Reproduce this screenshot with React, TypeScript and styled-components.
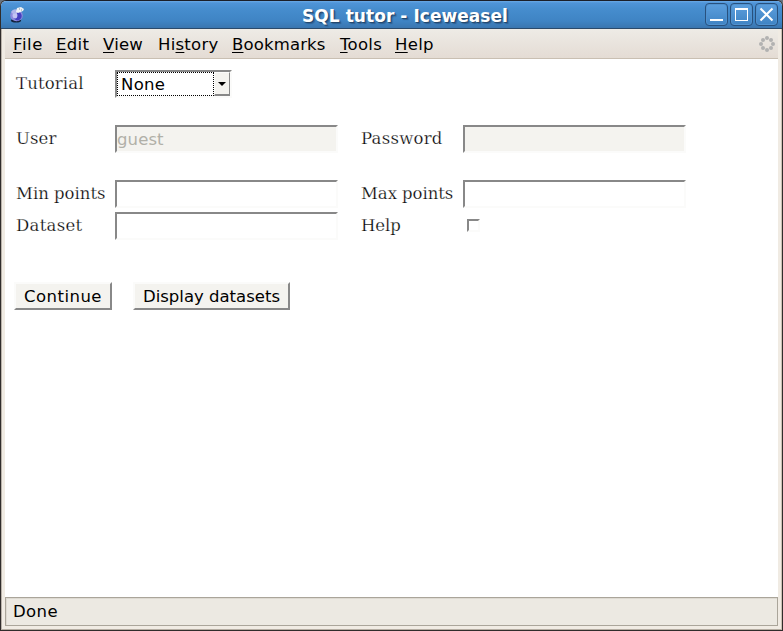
import React from "react";
import styled, { createGlobalStyle } from "styled-components";

const GlobalStyle = createGlobalStyle`
  * { box-sizing: border-box; }
  body { margin: 0; background: #69737f; overflow: hidden; }
`;

const sans = `"DejaVu Sans", sans-serif`;

const Window = styled.div`
  width: 783px;
  height: 631px;
  display: flex;
  flex-direction: column;
  border: 1px solid #302c2b;
  border-top-color: #1b1f29;
  border-radius: 6px 6px 0 0;
  overflow: hidden;
  background: #ece9e2;
  font-family: ${sans};
  font-size: 16.5px;
  color: #000;
`;

const TitleBar = styled.header`
  height: 28px;
  flex: none;
  display: grid;
  grid-template-columns: 107px 1fr 80px;
  align-items: center;
  border-bottom: 1px solid #2b4a6b;
  background: linear-gradient(#6aa9e6 0, #4f94d8 2px, #468dce 8px, #3f84c4 20px, #3a76b0 27px);
`;

const AppIcon = styled.svg`
  display: block;
  margin-left: 8px;
`;

const Title = styled.h1`
  margin: 0;
  padding-top: 2px;
  text-align: center;
  font-size: 17px;
  line-height: 20px;
  font-weight: bold;
  letter-spacing: 0.05px;
  color: #fff;
  text-shadow: 1px 1px 0 #24486e, 2px 2px 1px #24486e88;
  white-space: nowrap;
`;

const WindowButtons = styled.div`
  display: flex;
  gap: 2px;
  justify-content: flex-end;
  padding-right: 4px;
`;

const WindowButton = styled.button`
  width: 23px;
  height: 23px;
  padding: 0;
  border: 1px solid #28517e;
  border-radius: 4px;
  background: linear-gradient(#5c9fde, #3f83c3);
  box-shadow: inset 0 0 0 1px #5092d0;

  svg { display: block; }
`;

const Body = styled.div`
  flex: 1;
  display: flex;
  flex-direction: column;
  min-height: 0;
  border-left: 1px solid #b9b2aa;
  border-right: 1px solid #cbc1b4;
  border-bottom: 1px solid #b5ada2;
  padding: 0 3px 3px;
  background: #f0ebe3;
`;

const MenuBar = styled.nav`
  height: 30px;
  flex: none;
  display: flex;
  align-items: center;
  padding: 0 3px 0 8px;
  border-bottom: 1px solid #c9bfb2;
  background: linear-gradient(#eeebe6, #e4dcd4);
`;

const MenuItem = styled.span<{ $width: number; $spacing: number }>`
  width: ${(p) => p.$width}px;
  padding-top: 2px;
  line-height: 20px;
  letter-spacing: ${(p) => p.$spacing}px;
  white-space: nowrap;

  u { text-underline-offset: 2px; text-decoration-thickness: 1px; text-decoration-skip-ink: none; }
`;

const Throbber = styled.svg`
  margin-left: auto;
`;

const Page = styled.main`
  flex: 1;
  background: #fff;
  padding: 11px 9px 0;
`;

const FieldRow = styled.div<{ $gap: number }>`
  display: grid;
  grid-template-columns: 99px 246px 102px 223px;
  height: 28px;
  margin: 0 0 ${(p) => p.$gap}px 2px;
`;

const Label = styled.label<{ $spacing: number }>`
  font-family: "DejaVu Serif", serif;
  font-size: 16.5px;
  line-height: 20px;
  padding-top: 4px;
  letter-spacing: ${(p) => p.$spacing}px;
  -webkit-text-stroke: 0.25px #fff;
  white-space: nowrap;
`;

const inset = `
  border: 2px solid;
  border-color: #888 #fbfbfa #fbfbfa #888;
`;

const TextField = styled.input`
  ${inset}
  width: 223px;
  height: 28px;
  padding: 1px 0 0;
  border-radius: 0;
  outline: 0;
  background: #fff;
  font: 16.5px ${sans};
  letter-spacing: 0.1px;

  &:disabled { background: #f4f3ef; color: #b1b0a8; }
`;

const Select = styled.div`
  ${inset}
  display: flex;
  width: 117px;
  height: 28px;
`;

const SelectValue = styled.div`
  width: 97px;
  height: 24px;
  border: 1px dotted #000;
  padding: 2px 0 0 3px;
  line-height: 19px;
  letter-spacing: 0.3px;
`;

const SelectArrow = styled.div`
  flex: 1;
  height: 24px;
  display: grid;
  place-items: center;
  background: #f4f3ef;
  border: solid;
  border-width: 1px 1px 2px 1px;
  border-color: #fbfbfa #888 #888 #fbfbfa;
`;

const CheckBox = styled.input`
  ${inset}
  appearance: none;
  width: 13px;
  height: 13px;
  margin: 7px 0 0 4px;
  background: #fff;
`;

const Actions = styled.div`
  display: flex;
  gap: 21px;
  padding-top: 42px;
`;

const PushButton = styled.button<{ $width: number; $spacing: number }>`
  width: ${(p) => p.$width}px;
  height: 28px;
  padding: 0;
  border: 2px solid;
  border-color: #fbfbfa #888 #888 #fbfbfa;
  border-radius: 0;
  background: #f4f3ef;
  color: #000;
  font: 16.5px ${sans};
  letter-spacing: ${(p) => p.$spacing}px;
  white-space: nowrap;
`;

const StatusBar = styled.footer`
  height: 29px;
  flex: none;
  border: 1px solid #aaa59a;
  box-shadow: inset 1px 1px 0 #dedad2;
  background: #ece9e2;
  padding: 4px 0 0 7px;
  line-height: 20px;
  letter-spacing: 0.4px;
`;

const menus = [
  { before: "", key: "F", after: "ile", width: 43, spacing: 0.6 },
  { before: "", key: "E", after: "dit", width: 47, spacing: 0.3 },
  { before: "", key: "V", after: "iew", width: 55, spacing: 0.2 },
  { before: "Hi", key: "s", after: "tory", width: 74, spacing: 0.25 },
  { before: "", key: "B", after: "ookmarks", width: 108, spacing: 0.15 },
  { before: "", key: "T", after: "ools", width: 55, spacing: 0.3 },
  { before: "", key: "H", after: "elp", width: 40, spacing: 0.3 },
];

const dots = [[8, 2], [12, 4], [14, 8], [12, 12], [8, 14], [4, 12], [2, 8], [4, 4]];

export default function App() {
  return (
    <>
      <GlobalStyle />
      <Window>
        <TitleBar>
          <AppIcon width="16" height="18" viewBox="0 0 16 18">
            <ellipse cx="7" cy="14.5" rx="5" ry="2" fill="#14243f" />
            <ellipse cx="7.5" cy="9.5" rx="6.3" ry="5.8" fill="#8d8ade" />
            <ellipse cx="8.5" cy="10" rx="4.2" ry="4.4" fill="#4540c0" />
            <ellipse cx="6" cy="9.5" rx="2.4" ry="3" fill="#c3c4f4" />
            <path d="M2 6Q4 2 9 4L8 7L4 8Z" fill="#b0b6ea" />
            <path d="M7 6L8 2L12 1L15 3L14 5L9 7Z" fill="#eef2f5" />
            <path d="M10 3h1M12 4h1" stroke="#8c97a3" />
          </AppIcon>
          <Title>SQL tutor - Iceweasel</Title>
          <WindowButtons>
            <WindowButton aria-label="Minimize">
              <svg width="21" height="21"><path d="M4 16h13" stroke="#fff" strokeWidth="2" /></svg>
            </WindowButton>
            <WindowButton aria-label="Maximize">
              <svg width="21" height="21" shapeRendering="crispEdges">
                <path d="M4 5h13" stroke="#fff" strokeWidth="2" />
                <path d="M4.5 5v11.5h12V5" fill="none" stroke="#fff" />
              </svg>
            </WindowButton>
            <WindowButton aria-label="Close">
              <svg width="21" height="21"><path d="M4.5 4.5l12 12M16.5 4.5l-12 12" stroke="#fff" strokeWidth="2" /></svg>
            </WindowButton>
          </WindowButtons>
        </TitleBar>
        <Body>
          <MenuBar>
            {menus.map((m) => (
              <MenuItem key={m.key + m.after} $width={m.width} $spacing={m.spacing}>
                {m.before}<u>{m.key}</u>{m.after}
              </MenuItem>
            ))}
            <Throbber width="16" height="16">
              {dots.map(([x, y]) => (
                <circle key={`${x}-${y}`} cx={x} cy={y} r="2" fill="#b2b2b1" />
              ))}
            </Throbber>
          </MenuBar>
          <Page>
            <form>
              <FieldRow $gap={27}>
                <Label $spacing={0.15}>Tutorial</Label>
                <Select>
                  <SelectValue>None</SelectValue>
                  <SelectArrow>
                    <svg width="8" height="4"><path d="M0 0h8L4 4Z" /></svg>
                  </SelectArrow>
                </Select>
              </FieldRow>
              <FieldRow $gap={27}>
                <Label $spacing={0.1}>User</Label>
                <TextField disabled defaultValue="guest" />
                <Label $spacing={0.25}>Password</Label>
                <TextField disabled />
              </FieldRow>
              <FieldRow $gap={4}>
                <Label $spacing={0}>Min points</Label>
                <TextField />
                <Label $spacing={-0.05}>Max points</Label>
                <TextField />
              </FieldRow>
              <FieldRow $gap={0}>
                <Label $spacing={0.3}>Dataset</Label>
                <TextField />
                <Label $spacing={-0.1}>Help</Label>
                <CheckBox type="checkbox" />
              </FieldRow>
              <Actions>
                <PushButton type="button" $width={98} $spacing={0.45}>Continue</PushButton>
                <PushButton type="button" $width={157} $spacing={0}>Display datasets</PushButton>
              </Actions>
            </form>
          </Page>
          <StatusBar>Done</StatusBar>
        </Body>
      </Window>
    </>
  );
}
